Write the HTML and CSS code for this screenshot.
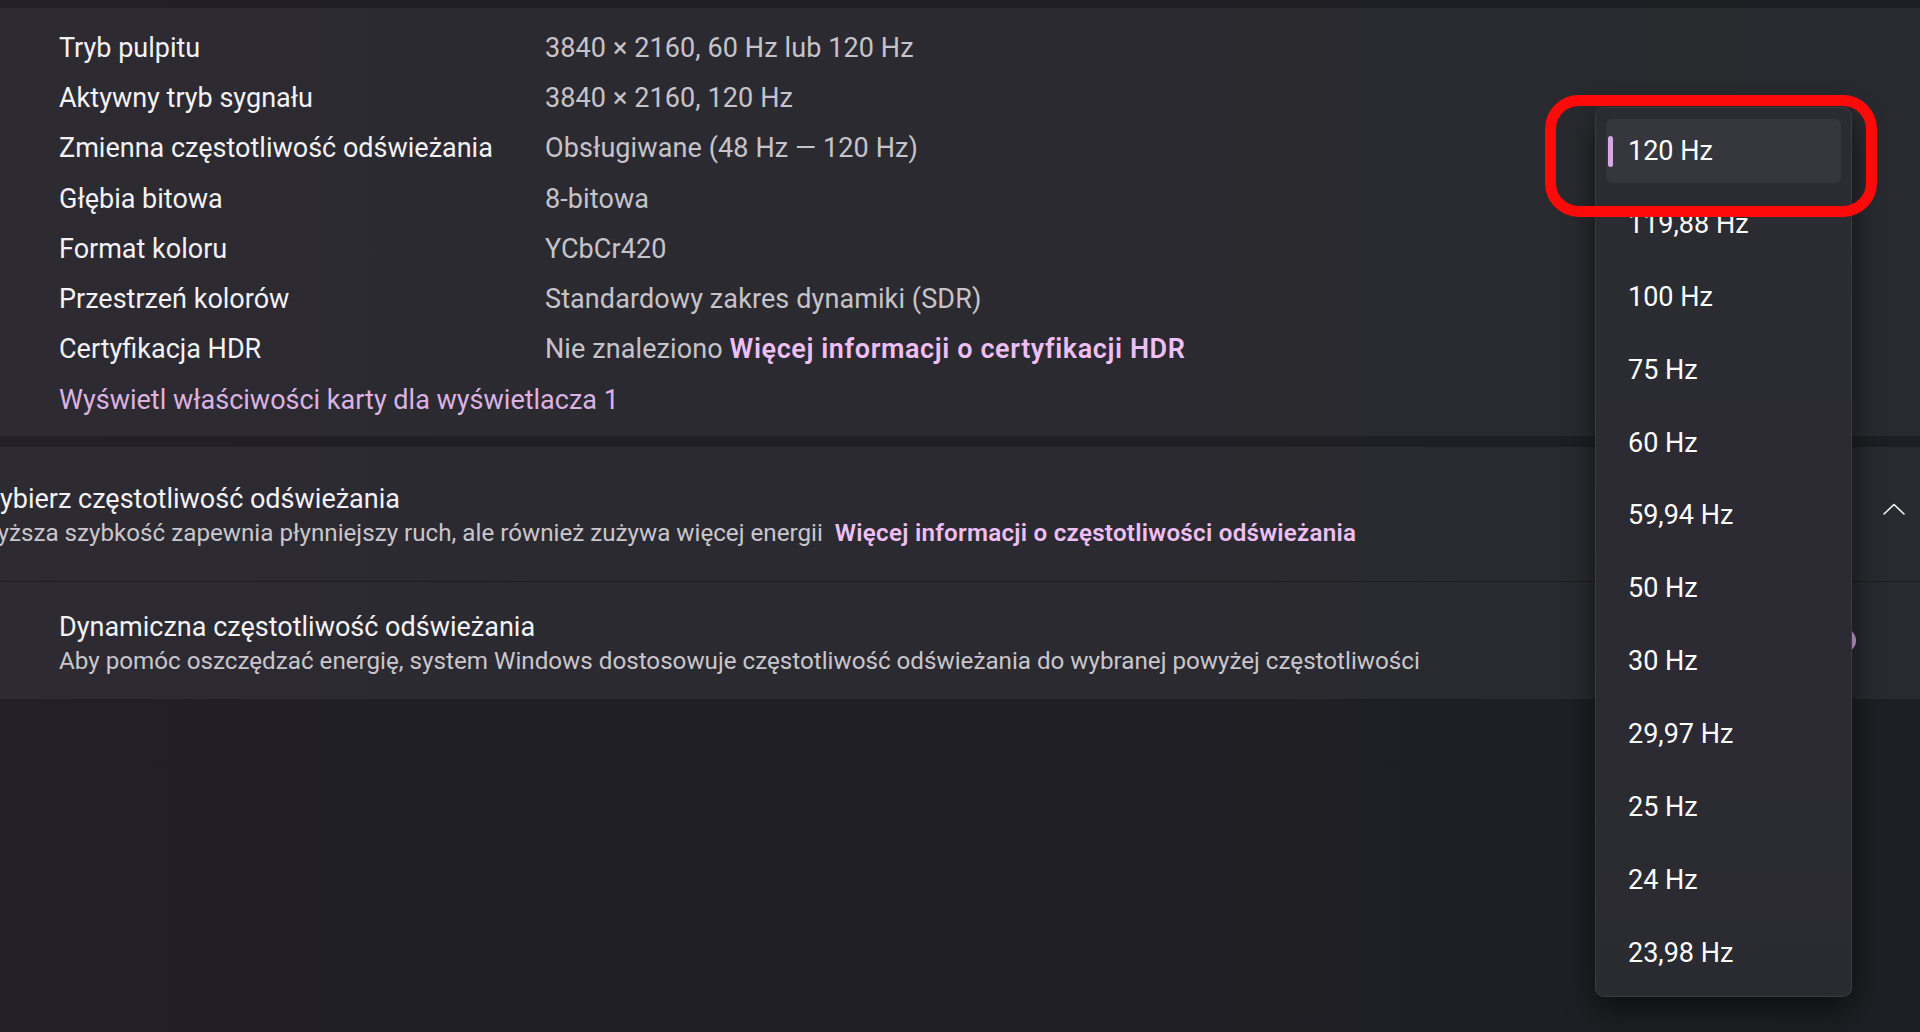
FILE: index.html
```html
<!DOCTYPE html>
<html lang="pl">
<head>
<meta charset="utf-8">
<title>Ekran - częstotliwość odświeżania</title>
<link rel="stylesheet" href="styles.css">
</head>
<body>
<div class="page">
  <div class="topbar"></div>

  <section class="card info">
    <div class="info-grid">
      <div class="label">Tryb pulpitu</div>
      <div class="value">3840 × 2160, 60 Hz lub 120 Hz</div>
      <div class="label">Aktywny tryb sygnału</div>
      <div class="value">3840 × 2160, 120 Hz</div>
      <div class="label">Zmienna częstotliwość odświeżania</div>
      <div class="value">Obsługiwane (48 Hz — 120 Hz)</div>
      <div class="label">Głębia bitowa</div>
      <div class="value">8-bitowa</div>
      <div class="label">Format koloru</div>
      <div class="value">YCbCr420</div>
      <div class="label">Przestrzeń kolorów</div>
      <div class="value">Standardowy zakres dynamiki (SDR)</div>
      <div class="label">Certyfikacja HDR</div>
      <div class="value">Nie znaleziono <span class="link-strong">Więcej informacji o certyfikacji HDR</span></div>
    </div>
    <div class="adapter-link">Wyświetl właściwości karty dla wyświetlacza 1</div>
  </section>

  <section class="card expander">
    <div class="expander-text">
      <div class="title">Wybierz częstotliwość odświeżania</div>
      <div class="subtitle">Wyższa szybkość zapewnia płynniejszy ruch, ale również zużywa więcej energii&nbsp; <span class="link-strong small">Więcej informacji o częstotliwości odświeżania</span></div>
    </div>
    <svg class="chevron" width="22" height="12" viewBox="0 0 22 12"><polyline points="1,11 11,1.5 21,11" fill="none" stroke="#f2f2f2" stroke-width="1.6" stroke-linejoin="round" stroke-linecap="round"/></svg>
  </section>

  <section class="card sub">
    <div class="sub-text">
      <div class="title">Dynamiczna częstotliwość odświeżania</div>
      <div class="subtitle">Aby pomóc oszczędzać energię, system Windows dostosowuje częstotliwość odświeżania do wybranej powyżej częstotliwości</div>
    </div>
    <div class="toggle"><span class="knob"></span></div>
  </section>

  <div class="dropdown">
    <div class="item selected"><span class="accent"></span>120 Hz</div>
    <div class="item">119,88 Hz</div>
    <div class="item">100 Hz</div>
    <div class="item">75 Hz</div>
    <div class="item">60 Hz</div>
    <div class="item">59,94 Hz</div>
    <div class="item">50 Hz</div>
    <div class="item">30 Hz</div>
    <div class="item">29,97 Hz</div>
    <div class="item">25 Hz</div>
    <div class="item">24 Hz</div>
    <div class="item">23,98 Hz</div>
  </div>

  <div class="annotation"></div>
</div>
</body>
</html>
```

FILE: styles.css
```css
* { box-sizing: border-box; }

html, body {
  margin: 0;
  padding: 0;
  width: 1920px;
  height: 1032px;
  overflow: hidden;
}

body {
  font-family: "Segoe UI", Roboto, "Noto Sans", sans-serif;
  color: #f3f1f5;
  background: linear-gradient(90deg, #221f27 0%, #201f25 55%, #1c1f23 100%);
}

.page {
  position: relative;
  width: 1920px;
  height: 1032px;
  overflow: hidden;
  display: flex;
  flex-direction: column;
}

.topbar {
  height: 8px;
  flex: none;
}

.card {
  background: rgba(255, 255, 255, 0.052);
  flex: none;
}

/* info card */
.info {
  height: 428px;
  padding: 15px 0 0 59px;
}

.info-grid {
  display: grid;
  grid-template-columns: 486px auto;
  grid-auto-rows: 50.2px;
  align-items: center;
}

.label {
  font-size: 27px;
  color: #f4f2f6;
}

.value {
  font-size: 27px;
  color: #c6c3ca;
  letter-spacing: 0.1px;
}

.link-strong {
  color: #eebff4;
  font-weight: 600;
  letter-spacing: 0.6px;
}

.link-strong.small {
  letter-spacing: 0.25px;
}

.adapter-link {
  height: 50px;
  display: flex;
  align-items: center;
  font-size: 27px;
  color: #dbb3e3;
  margin-top: 1px;
}

/* expander header */
.expander {
  margin-top: 11px;
  height: 135px;
  display: flex;
  align-items: center;
  justify-content: space-between;
  border-bottom: 1px solid #1d1c21;
  padding-right: 15px;
}

.expander-text {
  margin-left: -24px;
  margin-top: 4px;
}

.title {
  font-size: 27px;
  color: #f4f2f6;
  line-height: 34px;
}

.subtitle {
  font-size: 24.2px;
  color: #c9c6cd;
  line-height: 34px;
}

.chevron {
  display: block;
  margin-top: -10px;
}

/* dynamic refresh card */
.sub {
  height: 117px;
  display: flex;
  align-items: center;
  justify-content: space-between;
  padding: 0 64px 0 59px;
}

.sub-text {
  margin-top: 6px;
}

.toggle {
  width: 50px;
  height: 25px;
  border-radius: 13px;
  background: #d2a5df;
  position: relative;
}

.knob {
  position: absolute;
  right: 5px;
  top: 5px;
  width: 15px;
  height: 15px;
  border-radius: 50%;
  background: #1d1b21;
}

/* dropdown flyout */
.dropdown {
  position: absolute;
  left: 1595px;
  top: 107px;
  width: 257px;
  height: 890px;
  padding: 11px 10px;
  border-radius: 9px;
  background: linear-gradient(180deg, #2b2c32 0%, #2c2a33 60%, #2a2b30 100%);
  border: 1px solid #3a3a41;
  box-shadow: 0 12px 30px rgba(0, 0, 0, 0.55);
  display: flex;
  flex-direction: column;
  gap: 8.9px;
  z-index: 2;
}

.item {
  position: relative;
  height: 64px;
  flex: none;
  display: flex;
  align-items: center;
  padding-left: 22px;
  font-size: 27px;
  color: #ffffff;
  border-radius: 6px;
}

.item.selected {
  background: #36363d;
}

.accent {
  position: absolute;
  left: 2px;
  top: 17px;
  width: 5px;
  height: 31px;
  border-radius: 3px;
  background: #d8a8e6;
}

/* red annotation frame */
.annotation {
  position: absolute;
  left: 1545px;
  top: 95px;
  width: 332px;
  height: 122px;
  border: 11px solid #ff0a0a;
  border-radius: 34px;
  z-index: 3;
}
```
